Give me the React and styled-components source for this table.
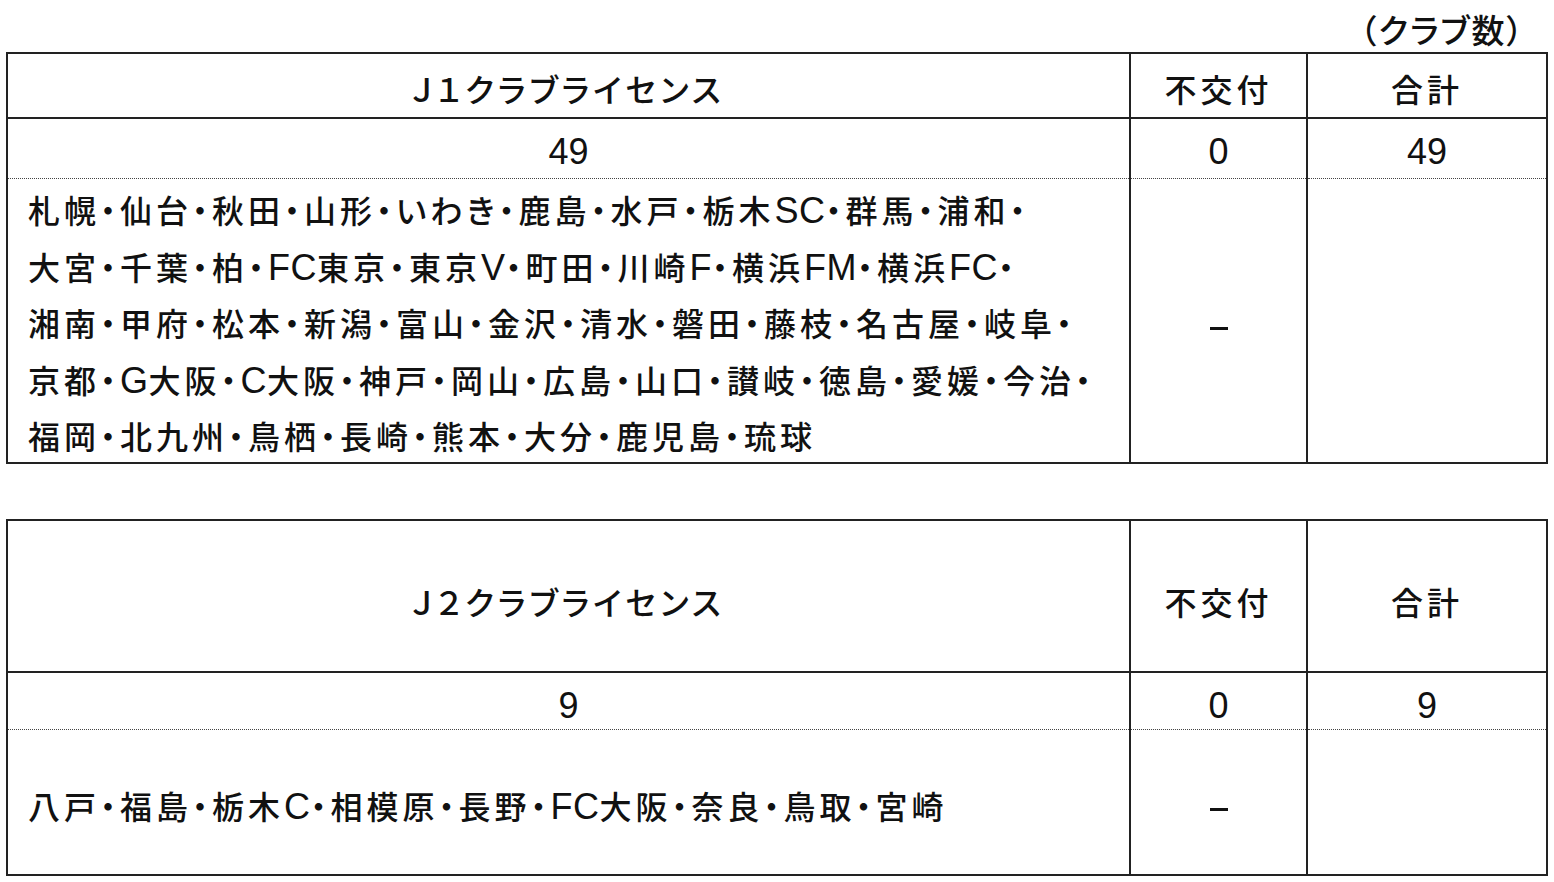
import React from "react";
import styled, { createGlobalStyle } from "styled-components";

const GlobalStyle = createGlobalStyle`
  html, body {
    margin: 0;
    padding: 0;
    background: #ffffff;
  }
  body {
    font-family: "Liberation Sans", "Noto Sans CJK JP", sans-serif;
    font-weight: 500;
    color: #111;
  }
`;

const Page = styled.div`
  width: 1554px;
  padding: 0 8px 0 6px;
  box-sizing: border-box;
`;

const Caption = styled.div`
  height: 52px;
  box-sizing: border-box;
  padding: 11px 21px 0 0;
  text-align: right;
  font-size: 33px;
  line-height: 42px;
  letter-spacing: 2px;
  font-feature-settings: "palt";
`;

const Table = styled.table`
  width: 1540px;
  table-layout: fixed;
  border-collapse: collapse;
  border: 2px solid #222;
  margin-bottom: ${(p) => p.$gap || 0}px;
  font-size: 32px;
  letter-spacing: 4px;
  font-feature-settings: "palt";
`;

const Col = styled.col`
  width: ${(p) => p.$w}px;
`;

const HeadCell = styled.th`
  height: ${(p) => p.$h}px;
  padding: ${(p) => p.$pad || 4}px 0 0;
  border: 2px solid #222;
  font-weight: 500;
  text-align: center;
  vertical-align: middle;
  box-sizing: border-box;
`;

const NumCell = styled.td`
  height: ${(p) => p.$h}px;
  padding: ${(p) => p.$pad}px 0 0;
  border: 2px solid #222;
  border-bottom: 1px dotted #444;
  text-align: center;
  vertical-align: middle;
  font-size: 36px;
  letter-spacing: 0;
  box-sizing: border-box;
`;

const BodyCell = styled.td`
  height: ${(p) => p.$h}px;
  padding: ${(p) => (p.$list ? `${p.$top}px 10px 0 20px` : `${p.$top}px 0 0`)};
  border: 2px solid #222;
  border-top: 1px dotted #444;
  text-align: ${(p) => (p.$list ? "left" : "center")};
  vertical-align: ${(p) => (p.$list ? "top" : "middle")};
  line-height: 56px;
  box-sizing: border-box;
`;

// fixed box so the last line's leading may hang over the bottom padding
const List = styled.div`
  height: ${(p) => p.$h}px;
`;

const Line = styled.span`
  display: block;
  white-space: nowrap;
`;

const Latin = styled.span`
  font-size: 36px;
  letter-spacing: 0.5px;
`;

const Dash = styled.span`
  display: inline-block;
  width: 18px;
  height: 3px;
  background: #111;
  vertical-align: middle;
`;

const tables = [
  {
    title: "Ｊ１クラブライセンス",
    count: 49,
    denied: 0,
    total: 49,
    headH: 65,
    headPad: 4,
    numH: 60,
    numPad: 8,
    bodyH: 285,
    bodyTop: 4,
    listH: 276,
    dashTop: 11,
    gap: 55,
    lines: [
      "札幌・仙台・秋田・山形・いわき・鹿島・水戸・栃木SC・群馬・浦和・",
      "大宮・千葉・柏・FC東京・東京V・町田・川崎F・横浜FM・横浜FC・",
      "湘南・甲府・松本・新潟・富山・金沢・清水・磐田・藤枝・名古屋・岐阜・",
      "京都・G大阪・C大阪・神戸・岡山・広島・山口・讃岐・徳島・愛媛・今治・",
      "福岡・北九州・鳥栖・長崎・熊本・大分・鹿児島・琉球",
    ],
  },
  {
    title: "Ｊ２クラブライセンス",
    count: 9,
    denied: 0,
    total: 9,
    headH: 152,
    headPad: 10,
    numH: 57,
    numPad: 11,
    bodyH: 146,
    bodyTop: 49,
    listH: 56,
    dashTop: 10,
    gap: 0,
    lines: ["八戸・福島・栃木C・相模原・長野・FC大阪・奈良・鳥取・宮崎"],
  },
];

// wrap latin letters / digits so they take the wider, untracked face
function Mixed({ text }) {
  return text
    .split(/([A-Za-z0-9]+)/)
    .map((part, i) =>
      /^[A-Za-z0-9]+$/.test(part) ? <Latin key={i}>{part}</Latin> : part
    );
}

function LicenseTable({ data }) {
  return (
    <Table $gap={data.gap}>
      <colgroup>
        <Col $w={1123} />
        <Col $w={177} />
        <Col $w={240} />
      </colgroup>
      <tbody>
        <tr>
          <HeadCell $h={data.headH} $pad={data.headPad}>
            {data.title}
          </HeadCell>
          <HeadCell $h={data.headH} $pad={data.headPad}>
            不交付
          </HeadCell>
          <HeadCell $h={data.headH} $pad={data.headPad}>
            合計
          </HeadCell>
        </tr>
        <tr>
          <NumCell $h={data.numH} $pad={data.numPad}>{data.count}</NumCell>
          <NumCell $h={data.numH} $pad={data.numPad}>{data.denied}</NumCell>
          <NumCell $h={data.numH} $pad={data.numPad}>{data.total}</NumCell>
        </tr>
        <tr>
          <BodyCell $h={data.bodyH} $top={data.bodyTop} $list>
            <List $h={data.listH}>
              {data.lines.map((l) => (
                <Line key={l}>
                  <Mixed text={l} />
                </Line>
              ))}
            </List>
          </BodyCell>
          <BodyCell $h={data.bodyH} $top={data.dashTop}>
            <Dash aria-label="－" />
          </BodyCell>
          <BodyCell $h={data.bodyH} $top={0} />
        </tr>
      </tbody>
    </Table>
  );
}

export default function App() {
  return (
    <>
      <GlobalStyle />
      <Page>
        <Caption>（クラブ数）</Caption>
        {tables.map((t) => (
          <LicenseTable key={t.title} data={t} />
        ))}
      </Page>
    </>
  );
}
